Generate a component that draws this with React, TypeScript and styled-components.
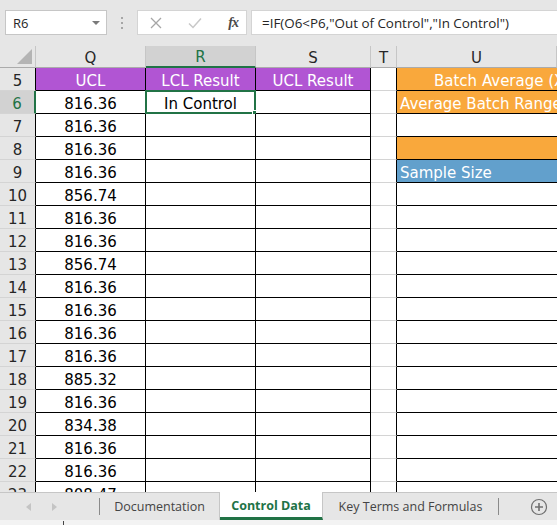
import React from 'react';
import styled, { createGlobalStyle, css } from 'styled-components';

const GlobalStyle = createGlobalStyle`
  html, body {
    margin: 0;
    padding: 0;
    background: #ffffff;
    overflow: hidden;
  }
`;

const SHEET_FONT = `'DejaVu Sans', 'Liberation Sans', sans-serif`;
const UI_FONT = `'Open Sans', 'Liberation Sans', sans-serif`;
const GREEN = '#217346';
const COLS = '36px 110px 110px 115px 26px 160px';

const Window = styled.div`
  width: 557px;
  height: 525px;
  display: flex;
  flex-direction: column;
  overflow: hidden;
  background: #ffffff;
`;

/* ---------- formula bar ---------- */

const FormulaBar = styled.div`
  height: 46px;
  flex: none;
  box-sizing: border-box;
  background: #e6e6e6;
  display: flex;
  align-items: flex-start;
  padding: 10px 0 0 5px;
`;

const NameBox = styled.div`
  width: 102px;
  height: 25px;
  box-sizing: border-box;
  background: #ffffff;
  border: 1px solid #c6c6c6;
  display: flex;
  align-items: center;
  justify-content: space-between;
  padding: 0 6px 0 7px;
  font-family: ${UI_FONT};
  font-size: 13px;
  color: #262626;
`;

const DropArrow = styled.span`
  width: 0;
  height: 0;
  border-left: 4px solid transparent;
  border-right: 4px solid transparent;
  border-top: 4px solid #7a7a7a;
`;

const Grip = styled.div`
  width: 30px;
  height: 25px;
  display: flex;
  flex-direction: column;
  align-items: center;
  justify-content: center;
  gap: 3px;
  & > span {
    width: 2px;
    height: 2px;
    background: #a6a6a6;
  }
`;

const FxBox = styled.div`
  width: 110px;
  height: 25px;
  box-sizing: border-box;
  background: #ffffff;
  border: 1px solid #d4d4d4;
  display: flex;
  align-items: center;
  justify-content: space-between;
  padding: 0 8px 0 12px;
`;

const FxLabel = styled.span`
  font-family: 'Liberation Serif', serif;
  font-style: italic;
  font-size: 14px;
  color: #4a4a4a;
  font-weight: bold;
  letter-spacing: -1px;
`;

const FormulaInput = styled.div`
  margin-left: 4px;
  flex: 1;
  height: 25px;
  box-sizing: border-box;
  background: #ffffff;
  border: 1px solid #d4d4d4;
  border-right: none;
  display: flex;
  align-items: center;
  padding-left: 10px;
  font-family: ${UI_FONT};
  font-size: 13.4px;
  color: #262626;
  white-space: nowrap;
  overflow: hidden;
`;

/* ---------- grid ---------- */

const Sheet = styled.div`
  flex: 1;
  overflow: hidden;
  font-family: ${SHEET_FONT};
`;

const HeaderRow = styled.div`
  display: grid;
  grid-template-columns: ${COLS};
  height: 22px;
  background: #e6e6e6;
`;

const ColHead = styled.div<{ $selected?: boolean }>`
  box-sizing: border-box;
  border-right: 1px solid #c6c6c6;
  border-bottom: 1px solid #ababab;
  display: flex;
  align-items: center;
  justify-content: center;
  padding-top: 2px;
  font-size: 15px;
  color: #262626;
  ${({ $selected }) =>
    $selected &&
    css`
      background: #d2d2d2;
      color: ${GREEN};
      border-bottom: 2px solid ${GREEN};
    `}
`;

const Corner = styled(ColHead)`
  position: relative;
  &::after {
    content: '';
    position: absolute;
    right: 3px;
    bottom: 3px;
    width: 0;
    height: 0;
    border-left: 15px solid transparent;
    border-bottom: 15px solid #b4b4b4;
  }
`;

const Row = styled.div`
  display: grid;
  grid-template-columns: ${COLS};
  height: 23px;
`;

const RowHead = styled.div<{ $selected?: boolean }>`
  box-sizing: border-box;
  background: ${({ $selected }) => ($selected ? '#d2d2d2' : '#e6e6e6')};
  border-bottom: 1px solid #d4d4d4;
  border-right: ${({ $selected }) => ($selected ? `2px solid ${GREEN}` : '1px solid #000')};
  display: flex;
  align-items: center;
  justify-content: center;
  padding-top: 3px;
  font-size: 15px;
  color: ${({ $selected }) => ($selected ? GREEN : '#262626')};
`;

type CellProps = {
  $bg?: string;
  $light?: boolean;
  $align?: 'left' | 'center';
  $indent?: number;
  $grid?: 'black' | 'light';
  $selected?: boolean;
};

const Cell = styled.div<CellProps>`
  position: relative;
  box-sizing: border-box;
  background: ${({ $bg }) => $bg || '#ffffff'};
  border-right: 1px solid #000;
  border-bottom: 1px solid ${({ $grid }) => ($grid === 'light' ? '#d4d4d4' : '#000')};
  display: flex;
  align-items: center;
  justify-content: ${({ $align }) => ($align === 'left' ? 'flex-start' : 'center')};
  padding-left: ${({ $indent }) => $indent ?? 0}px;
  padding-top: 4px;
  font-size: 15px;
  color: ${({ $light }) => ($light ? '#ffffff' : '#000000')};
  white-space: nowrap;
  overflow: visible;
  ${({ $selected }) =>
    $selected &&
    css`
      &::before {
        content: '';
        position: absolute;
        left: -1px;
        top: -1px;
        right: -1px;
        bottom: -1px;
        border: 2px solid ${GREEN};
        pointer-events: none;
      }
      &::after {
        content: '';
        position: absolute;
        right: -4px;
        bottom: -4px;
        width: 5px;
        height: 5px;
        background: ${GREEN};
        border: 1px solid #ffffff;
      }
    `}
`;

const EdgeCell = styled(Cell)`
  border-right: none;
  overflow: hidden;
`;

/* ---------- sheet tabs ---------- */

const TabBar = styled.div`
  height: 28px;
  flex: none;
  box-sizing: border-box;
  background: #e6e6e6;
  border-top: 1px solid #c6c6c6;
  display: flex;
  align-items: stretch;
  font-family: ${UI_FONT};
  font-size: 12.5px;
  color: #444444;
`;

const NavArrows = styled.div`
  width: 100px;
  display: flex;
  align-items: center;
  padding-left: 26px;
  gap: 21px;
  box-sizing: border-box;
  border-right: 1px solid #8a8a8a;
  margin: 5px 0;
`;

const Arrow = styled.span<{ $dir: 'left' | 'right' }>`
  width: 0;
  height: 0;
  border-top: 4px solid transparent;
  border-bottom: 4px solid transparent;
  ${({ $dir }) =>
    $dir === 'left'
      ? css`border-right: 5px solid #c4c4c4;`
      : css`border-left: 5px solid #c4c4c4;`}
`;

const Tab = styled.div<{ $active?: boolean; $width: number; $last?: boolean }>`
  width: ${({ $width }) => $width}px;
  box-sizing: border-box;
  display: flex;
  align-items: center;
  justify-content: center;
  border-right: ${({ $last }) => ($last ? 'none' : '1px solid #c6c6c6')};
  ${({ $active }) =>
    $active &&
    css`
      background: #ffffff;
      margin-top: -1px;
      color: ${GREEN};
      font-weight: bold;
      border-bottom: 3px solid ${GREEN};
      padding-top: 2px;
    `}
`;

const TabSpacer = styled.div`
  width: 1px;
  background: #8a8a8a;
  margin: 5px 0 5px 0;
`;

const AddSheet = styled.div`
  flex: 1;
  display: flex;
  align-items: center;
  justify-content: flex-end;
  padding-right: 9px;
`;

const StatusStrip = styled.div`
  height: 5px;
  flex: none;
  background: #f3f3f3;
  position: relative;
  &::after {
    content: '';
    position: absolute;
    left: 63px;
    top: 1px;
    width: 1px;
    height: 4px;
    background: #444;
  }
`;

/* ---------- data ---------- */

const PURPLE = '#b155d3';
const ORANGE = '#f9a83c';
const BLUE = '#62a0cc';

const ucl = [
  '816.36', '816.36', '816.36', '816.36', '856.74', '816.36', '816.36', '856.74', '816.36',
  '816.36', '816.36', '816.36', '885.32', '816.36', '834.38', '816.36', '816.36', '808.47',
];

type UCell = { text?: string; bg?: string; indent?: number };

const uColumn: Record<number, UCell> = {
  5: { text: 'Batch Average (X', bg: ORANGE, indent: 37 },
  6: { text: 'Average Batch Range', bg: ORANGE, indent: 3 },
  8: { bg: ORANGE },
  9: { text: 'Sample Size', bg: BLUE, indent: 3 },
};

const XIcon = () => (
  <svg width="12" height="12" viewBox="0 0 12 12">
    <path d="M1 1 L11 11 M11 1 L1 11" stroke="#a6a6a6" strokeWidth="1.3" fill="none" />
  </svg>
);

const CheckIcon = () => (
  <svg width="14" height="12" viewBox="0 0 14 12">
    <path d="M1 6.5 L5 10.5 L13 1.5" stroke="#c8c8c8" strokeWidth="1.5" fill="none" />
  </svg>
);

const PlusCircle = () => (
  <svg width="18" height="18" viewBox="0 0 18 18">
    <circle cx="9" cy="9" r="7.5" stroke="#707070" strokeWidth="1.2" fill="none" />
    <path d="M9 5 V13 M5 9 H13" stroke="#707070" strokeWidth="1.6" />
  </svg>
);

export default function App() {
  return (
    <Window>
      <GlobalStyle />
      <FormulaBar>
        <NameBox>
          <span>R6</span>
          <DropArrow />
        </NameBox>
        <Grip>
          <span />
          <span />
          <span />
        </Grip>
        <FxBox>
          <XIcon />
          <CheckIcon />
          <FxLabel>fx</FxLabel>
        </FxBox>
        <FormulaInput>=IF(O6&lt;P6,"Out of Control","In Control")</FormulaInput>
      </FormulaBar>

      <Sheet>
        <HeaderRow>
          <Corner />
          <ColHead>Q</ColHead>
          <ColHead $selected>R</ColHead>
          <ColHead>S</ColHead>
          <ColHead>T</ColHead>
          <ColHead>U</ColHead>
        </HeaderRow>

        <Row>
          <RowHead>5</RowHead>
          <Cell $bg={PURPLE} $light>UCL</Cell>
          <Cell $bg={PURPLE} $light>LCL Result</Cell>
          <Cell $bg={PURPLE} $light>UCL Result</Cell>
          <Cell $grid="light" />
          <EdgeCell $bg={uColumn[5].bg} $light $align="left" $indent={uColumn[5].indent}>
            {uColumn[5].text}
          </EdgeCell>
        </Row>

        {ucl.map((value, i) => {
          const n = i + 6;
          const u = uColumn[n] || {};
          return (
            <Row key={n}>
              <RowHead $selected={n === 6}>{n}</RowHead>
              <Cell>{value}</Cell>
              <Cell $selected={n === 6}>{n === 6 ? 'In Control' : ''}</Cell>
              <Cell />
              <Cell $grid="light" />
              <EdgeCell $bg={u.bg} $light $align="left" $indent={u.indent}>
                {u.text}
              </EdgeCell>
            </Row>
          );
        })}
      </Sheet>

      <TabBar>
        <NavArrows>
          <Arrow $dir="left" />
          <Arrow $dir="right" />
        </NavArrows>
        <Tab $width={120}>Documentation</Tab>
        <Tab $width={103} $active>Control Data</Tab>
        <Tab $width={175} $last>Key Terms and Formulas</Tab>
        <TabSpacer />
        <AddSheet>
          <PlusCircle />
        </AddSheet>
      </TabBar>
      <StatusStrip />
    </Window>
  );
}
